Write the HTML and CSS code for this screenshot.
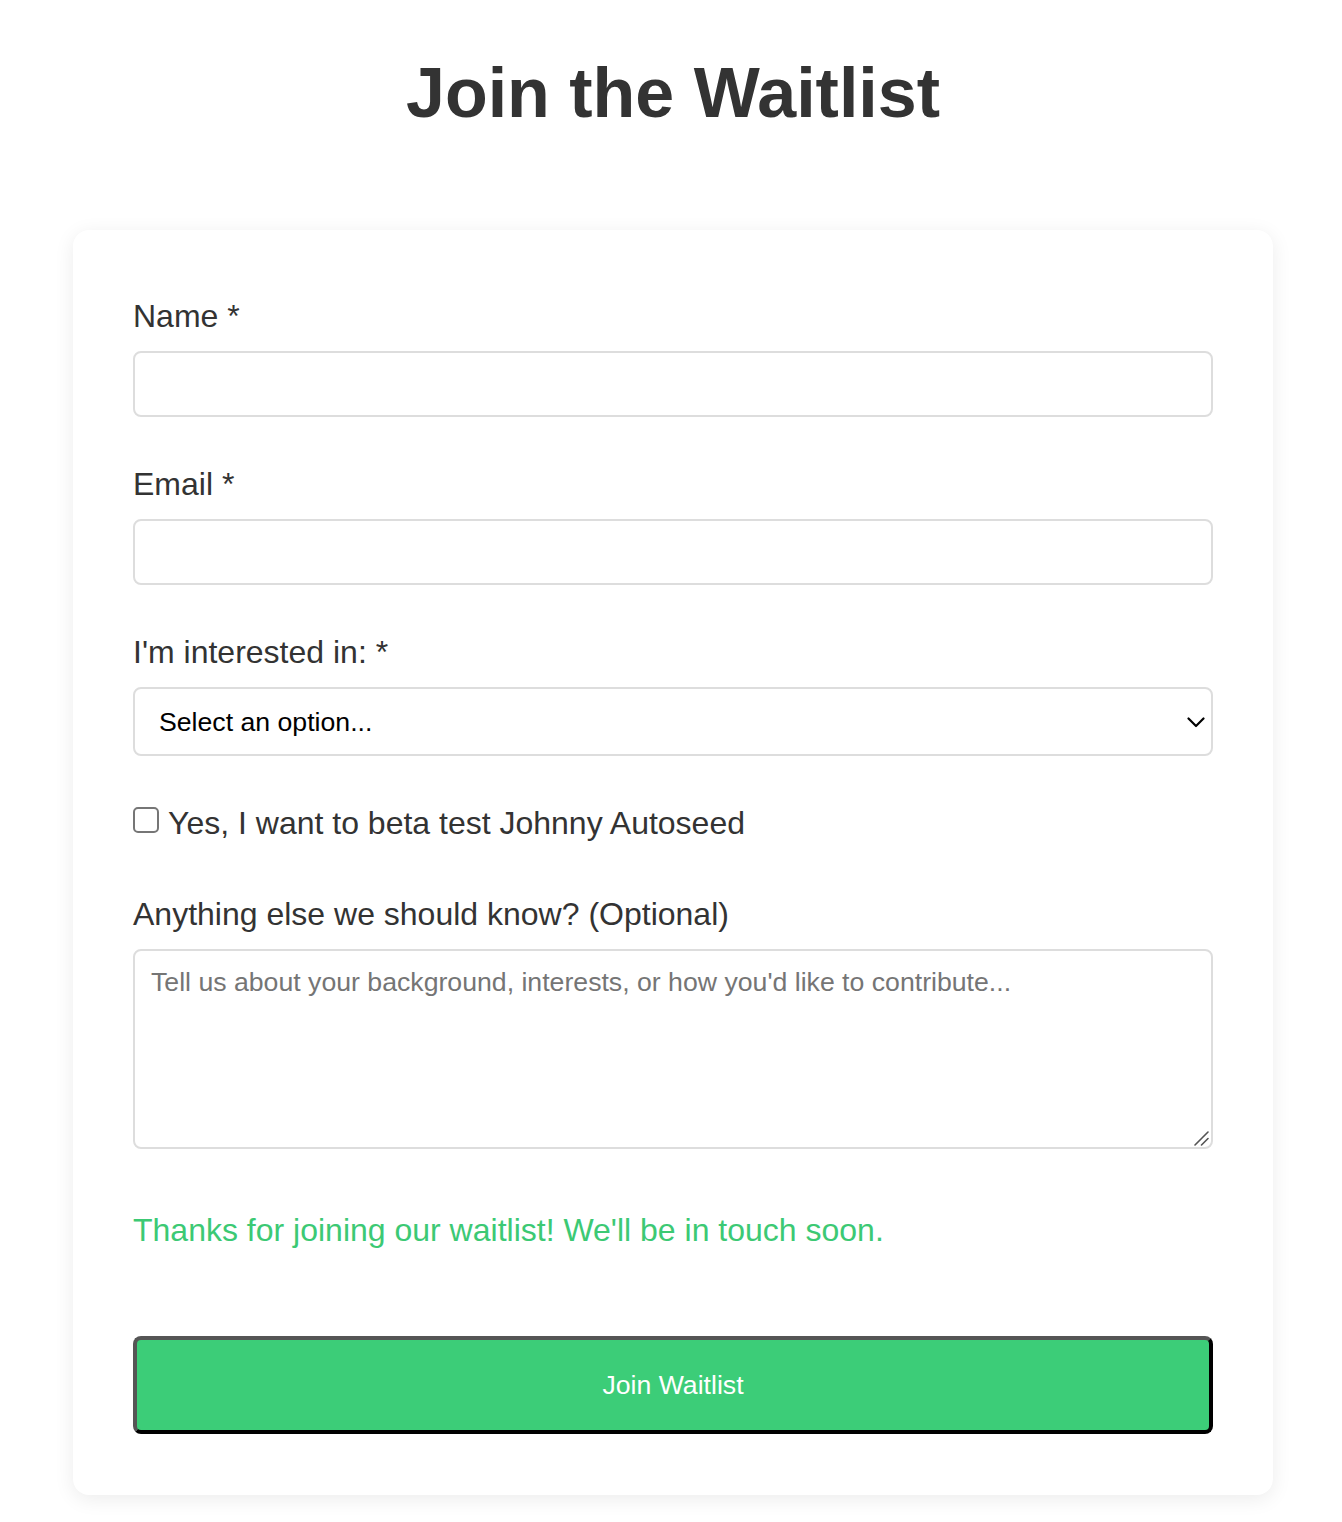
FILE: index.html
```html
<!DOCTYPE html>
<html lang="en">
<head>
<meta charset="utf-8">
<title>Join the Waitlist</title>
<link rel="stylesheet" href="styles.css">
</head>
<body>
  <main class="page">
    <h1 class="title">Join the Waitlist</h1>
    <form class="card">
      <div class="group">
        <label class="label" for="name">Name *</label>
        <input class="field" id="name" type="text">
      </div>
      <div class="group">
        <label class="label" for="email">Email *</label>
        <input class="field" id="email" type="email">
      </div>
      <div class="group">
        <label class="label" for="interest">I'm interested in: *</label>
        <div class="select-wrap">
          <select class="select" id="interest">
            <option>Select an option...</option>
          </select>
          <svg class="chevron" width="18" height="11" viewBox="0 0 18 11" aria-hidden="true">
            <path d="M1.5 1.5 L9 9 L16.5 1.5" fill="none" stroke="#000" stroke-width="2.2" stroke-linecap="round" stroke-linejoin="round"/>
          </svg>
        </div>
      </div>
      <div class="group check-group">
        <label class="check-label"><input class="check" type="checkbox"><span>Yes, I want to beta test Johnny Autoseed</span></label>
      </div>
      <div class="group">
        <label class="label" for="notes">Anything else we should know? (Optional)</label>
        <div class="area-wrap">
          <textarea class="area" id="notes" placeholder="Tell us about your background, interests, or how you'd like to contribute..."></textarea>
          <svg class="grip" width="16" height="16" viewBox="0 0 16 16" aria-hidden="true">
            <path d="M2 15 L15 2 M8.5 15 L15 8.5" fill="none" stroke="#555" stroke-width="1.6" stroke-linecap="round"/>
          </svg>
        </div>
      </div>
      <p class="success">Thanks for joining our waitlist! We'll be in touch soon.</p>
      <button class="submit" type="button">Join Waitlist</button>
    </form>
  </main>
</body>
</html>
```
FILE: styles.css
```css
* { box-sizing: border-box; }
html, body { margin: 0; padding: 0; background: #fff; }
body {
  font-family: "Liberation Sans", Arial, Helvetica, sans-serif;
  color: #333;
}
.page {
  width: 1200px;
  margin: 0 auto;
  padding: 52px 0 40px;
  position: relative;
  left: 2px;
}
.title {
  margin: 0;
  text-align: center;
  font-size: 70px;
  line-height: 83px;
  font-weight: 700;
  color: #333;
}
.card {
  margin-top: 95px;
  background: #fff;
  border-radius: 16px;
  box-shadow: 0 4px 20px rgba(0, 0, 0, 0.08);
  padding: 68px 60px 61px;
}
.group { margin-bottom: 49px; }
.label {
  display: block;
  font-size: 32px;
  line-height: 37px;
  margin-bottom: 16px;
  color: #333;
}
.field {
  display: block;
  width: 100%;
  height: 66px;
  padding: 16px;
  border: 2px solid #ddd;
  border-radius: 8px;
  font-family: inherit;
  font-size: 26.67px;
  background: #fff;
  outline: none;
}
.select-wrap { position: relative; }
.select {
  display: block;
  width: 100%;
  height: 69px;
  margin-top: 1px;
  padding: 0 24px;
  border: 2px solid #ddd;
  border-radius: 8px;
  background: #fff;
  font-family: inherit;
  font-size: 26.67px;
  color: #000;
  -webkit-appearance: none;
  appearance: none;
  outline: none;
}
.chevron {
  position: absolute;
  right: 8px;
  top: 30px;
  pointer-events: none;
}
.check-group { margin-bottom: 54px; }
.check-label {
  display: flex;
  align-items: center;
  font-size: 32px;
  line-height: 37px;
  color: #333;
}
.check {
  -webkit-appearance: none;
  appearance: none;
  width: 26px;
  height: 26px;
  margin: 0 9px 8px 0;
  border: 2px solid #767676;
  border-radius: 5px;
  background: #fff;
  flex: none;
}
.area-wrap {
  position: relative;
  margin-top: 8px;
}
.area {
  display: block;
  width: 100%;
  height: 200px;
  padding: 16px;
  border: 2px solid #ddd;
  border-radius: 8px;
  font-family: inherit;
  font-size: 26.67px;
  line-height: 30px;
  resize: none;
  outline: none;
  background: #fff;
}
.area::placeholder { color: #757575; }
.grip {
  position: absolute;
  right: 4px;
  bottom: 3px;
  pointer-events: none;
}
.success {
  margin: 63px 0 0;
  font-size: 32px;
  line-height: 37px;
  color: #3cc974;
}
.submit {
  display: block;
  width: 100%;
  height: 98px;
  margin-top: 87px;
  background: #3ccd78;
  color: #fff;
  font-family: inherit;
  font-size: 26.67px;
  border-style: solid;
  border-width: 4px;
  border-color: #555 #000 #000 #555;
  border-radius: 8px;
}
```
